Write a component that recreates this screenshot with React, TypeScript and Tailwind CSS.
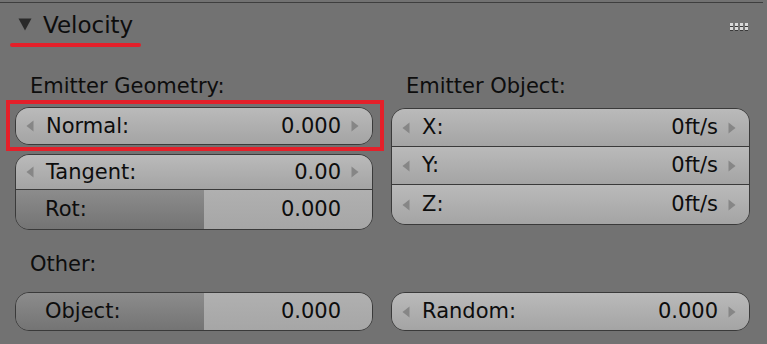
import React from 'react'

const font = { fontFamily: '"DejaVu Sans", "Liberation Sans", sans-serif' }

const ArrowL = () => (
  <svg width="8" height="12" viewBox="0 0 8 12" className="shrink-0">
    <path d="M7.5 0.5 L0.5 6 L7.5 11.5 Z" fill="#868686" />
  </svg>
)

const ArrowR = () => (
  <svg width="8" height="12" viewBox="0 0 8 12" className="shrink-0">
    <path d="M0.5 0.5 L7.5 6 L0.5 11.5 Z" fill="#868686" />
  </svg>
)

// number field row with arrows
const NumRow = ({ label, value, h, cls }: { label: string; value: string; h: string; cls: string }) => (
  <div className={`flex items-center bg-gradient-to-b from-[#bababa] to-[#a4a4a4] ${h} ${cls}`}>
    <div className="w-[30px] flex justify-start pl-[10px]">
      <ArrowL />
    </div>
    <span className="flex-1 text-[21px] leading-none text-[#0d0d0d]">{label}</span>
    <span className="text-[21px] leading-none text-[#0d0d0d]">{value}</span>
    <div className="w-[31px] flex justify-start pl-[10px]">
      <ArrowR />
    </div>
  </div>
)

// slider row (dark filled part on the left)
const SliderRow = ({ label, value, h, cls }: { label: string; value: string; h: string; cls: string }) => (
  <div className={`flex ${h} ${cls} overflow-hidden`}>
    <div className="w-[188px] flex items-center pl-[29px] bg-gradient-to-b from-[#8c8c8c] to-[#747474]">
      <span className="text-[21px] leading-none text-[#0d0d0d]">{label}</span>
    </div>
    <div className="flex-1 flex items-center justify-end pr-[31px] bg-gradient-to-b from-[#b0b0b0] to-[#a6a6a6]">
      <span className="text-[21px] leading-none text-[#0d0d0d]">{value}</span>
    </div>
  </div>
)

const Label = ({ children }: { children: React.ReactNode }) => (
  <div className="pl-[15px] h-[24px] text-[21px] leading-[24px] text-[#0d0d0d]">{children}</div>
)

export default function App() {
  return (
    <div className="relative w-[767px] h-[344px] bg-[#727272] overflow-hidden" style={font}>
      <div className="pt-[2px]">
        <div className="h-px mr-[4px] bg-[#3e3e3e]" />
      </div>

      {/* header */}
      <div className="flex items-center h-[45px] pl-[18px] pr-[18px]">
        <svg width="14" height="13" viewBox="0 0 14 13" className="mt-[-3px]">
          <path d="M0.5 0.5 H13.5 L7 12.5 Z" fill="#2a2a2a" />
        </svg>
        <span className="ml-[11px] text-[23px] leading-none text-[#0d0d0d]">Velocity</span>
        <svg width="19" height="9" viewBox="0 0 19 9" className="ml-auto mt-[3px]">
          {[0, 5, 10, 15].map((x) =>
            [0, 4].map((y) => (
              <g key={`${x}-${y}`}>
                <rect x={x} y={y + 1} width="3" height="3" fill="#3a3a3a" />
                <rect x={x} y={y} width="3" height="3" fill="#d8d8d8" />
              </g>
            ))
          )}
        </svg>
      </div>

      {/* two columns */}
      <div className="flex gap-[18px] pl-[15px] pr-[17px] mt-[26px]">
        <div className="w-[358px] flex flex-col">
          <Label>Emitter Geometry:</Label>
          <div className="mt-[9px] border border-[#3a3a3a] rounded-[14px] overflow-hidden">
            <NumRow label="Normal:" value="0.000" h="h-[36px]" cls="" />
          </div>
          <div className="mt-[9px] border border-[#3a3a3a] rounded-[14px] overflow-hidden">
            <NumRow label="Tangent:" value="0.00" h="h-[35px]" cls="border-b border-[#3a3a3a]" />
            <SliderRow label="Rot:" value="0.000" h="h-[39px]" cls="" />
          </div>
        </div>
        <div className="w-[359px] flex flex-col">
          <Label>Emitter Object:</Label>
          <div className="mt-[10px] border border-[#3a3a3a] rounded-[14px] overflow-hidden">
            <NumRow label="X:" value="0ft/s" h="h-[38px]" cls="border-b border-[#3a3a3a]" />
            <NumRow label="Y:" value="0ft/s" h="h-[38px]" cls="border-b border-[#3a3a3a]" />
            <NumRow label="Z:" value="0ft/s" h="h-[39px]" cls="" />
          </div>
        </div>
      </div>

      {/* other */}
      <div className="mt-[22px] pl-[15px]">
        <Label>Other:</Label>
      </div>
      <div className="flex gap-[18px] pl-[15px] pr-[17px] mt-[16px]">
        <div className="w-[358px] border border-[#3a3a3a] rounded-[14px] overflow-hidden">
          <SliderRow label="Object:" value="0.000" h="h-[37px]" cls="" />
        </div>
        <div className="w-[359px] border border-[#3a3a3a] rounded-[14px] overflow-hidden">
          <NumRow label="Random:" value="0.000" h="h-[37px]" cls="" />
        </div>
      </div>

      {/* red annotations */}
      <div className="absolute left-[10px] top-[43px] w-[131px] h-[4px] rounded-full bg-[#e3202a]" />
      <div className="absolute left-[6px] top-[100px] w-[378px] h-[51px] border-[4px] border-[#e3202a]" />
    </div>
  )
}
